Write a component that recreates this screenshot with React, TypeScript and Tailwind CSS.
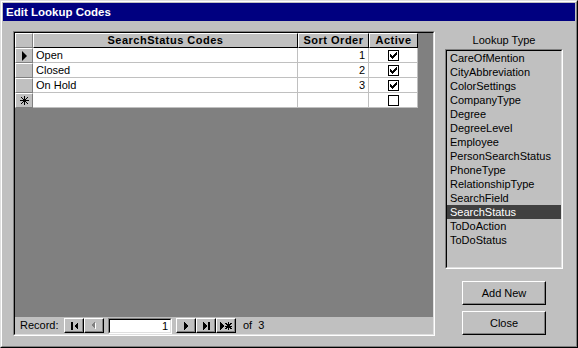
import React from 'react';

const rows = [
  {name: 'Open', order: 1, active: true},
  {name: 'Closed', order: 2, active: true},
  {name: 'On Hold', order: 3, active: true},
];

const lookupTypes = [
  'CareOfMention', 'CityAbbreviation', 'ColorSettings', 'CompanyType', 'Degree', 'DegreeLevel',
  'Employee', 'PersonSearchStatus', 'PhoneType', 'RelationshipType', 'SearchField', 'SearchStatus',
  'ToDoAction', 'ToDoStatus',
];

const raised = 'border border-t-white border-l-white border-r-black border-b-black shadow-[inset_-1px_-1px_0_#808080]';
const selectorCell = 'w-[18px] h-[15px] shrink-0 bg-[#c0c0c0] border border-t-white border-l-white border-r-[#808080] border-b-[#808080] flex items-center justify-center';

function Star({size = 9}: {size?: number}) {
  return (
    <svg width={size} height={size} viewBox="0 0 9 9" shapeRendering="crispEdges">
      <g stroke="black" strokeWidth="1">
        <line x1="4.5" y1="0" x2="4.5" y2="9"/>
        <line x1="0" y1="4.5" x2="9" y2="4.5"/>
        <line x1="1" y1="1" x2="8" y2="8"/>
        <line x1="8" y1="1" x2="1" y2="8"/>
      </g>
    </svg>
  );
}

function Check({on}: {on: boolean}) {
  return (
    <div className="w-[11px] h-[11px] border border-black bg-white flex items-center justify-center">
      {on && (
        <svg width="7" height="7" viewBox="0 0 7 7" shapeRendering="crispEdges">
          <path d="M6 0h1v3h-1v1h-1v1h-1v1h-1v1h-1v-1h-1v-1h-1v-3h1v1h1v1h1v-1h1v-1h1v-1h1z" fill="black"/>
        </svg>
      )}
    </div>
  );
}

function NavButton({children}: {children: React.ReactNode}) {
  return (
    <div className={`w-[20px] h-[15px] bg-[#c0c0c0] flex items-center justify-center ${raised}`}>
      {children}
    </div>
  );
}

function GridRow({name, order, active, current}: {name: string; order: number; active: boolean; current?: boolean}) {
  return (
    <div className="flex">
      <div className={selectorCell}>
        {current && (
          <svg width="5" height="10" viewBox="0 0 5 10">
            <polygon points="0,0 5,5 0,10" fill="black"/>
          </svg>
        )}
      </div>
      <div className="w-[265px] h-[15px] bg-white border-r border-b border-[#c0c0c0] pl-[3px] leading-[14px]">{name}</div>
      <div className="w-[71px] h-[15px] bg-white border-r border-b border-[#c0c0c0] pr-[3px] text-right leading-[14px]">{order}</div>
      <div className="w-[49px] h-[15px] bg-white border-r border-b border-[#c0c0c0] flex items-center justify-center">
        <Check on={active}/>
      </div>
    </div>
  );
}

export default function App() {
  return (
    <div className="w-[578px] h-[348px] bg-[#c0c0c0] border border-t-[#dfdfdf] border-l-[#dfdfdf] border-r-black border-b-black font-['Liberation_Sans',Arial,sans-serif] text-[11px] text-black select-none">
      <div className="h-full flex flex-col border border-t-white border-l-white border-r-[#808080] border-b-[#808080] p-px">
        <div className="h-[18px] shrink-0 bg-[#000080] text-white font-bold text-[11.5px] leading-[18px] pl-[3px]">Edit Lookup Codes</div>

        <div className="flex pl-[10px] pt-[10px]">
          {/* datasheet */}
          <div className="w-[422px] h-[305px] border border-t-[#808080] border-l-[#808080] border-r-white border-b-white">
            <div className="h-full flex flex-col border border-t-black border-l-black border-r-[#dfdfdf] border-b-[#dfdfdf]">
              <div className="flex-1 bg-[#808080]">
                <div className="flex">
                  <div className={selectorCell}/>
                  <div className="w-[265px] h-[15px] bg-[#c0c0c0] border border-t-white border-l-white border-r-black border-b-black font-bold tracking-[0.5px] text-center leading-[13px]">SearchStatus Codes</div>
                  <div className="w-[71px] h-[15px] bg-[#c0c0c0] border border-t-white border-l-white border-r-black border-b-black font-bold tracking-[0.5px] text-center leading-[13px]">Sort Order</div>
                  <div className="w-[49px] h-[15px] bg-[#c0c0c0] border border-t-white border-l-white border-r-black border-b-black font-bold tracking-[0.5px] text-center leading-[13px]">Active</div>
                </div>
                {rows.map((r, i) => (
                  <GridRow key={r.name} {...r} current={i === 0}/>
                ))}
                <div className="flex">
                  <div className={selectorCell}><Star/></div>
                  <div className="w-[265px] h-[15px] bg-white border-r border-b border-[#c0c0c0]"/>
                  <div className="w-[71px] h-[15px] bg-white border-r border-b border-[#c0c0c0]"/>
                  <div className="w-[49px] h-[15px] bg-white border-r border-b border-[#c0c0c0] flex items-center justify-center">
                    <Check on={false}/>
                  </div>
                </div>
              </div>

              {/* record navigator */}
              <div className="h-[17px] shrink-0 flex items-center pl-[5px] bg-[#c0c0c0]">
                <span className="w-[44px]">Record:</span>
                <NavButton>
                  <svg width="7" height="8" viewBox="0 0 7 8" shapeRendering="crispEdges">
                    <rect x="0" y="0" width="2" height="8" fill="black"/>
                    <polygon points="7,0 3,4 7,8" fill="black"/>
                  </svg>
                </NavButton>
                <NavButton>
                  <svg width="6" height="9" viewBox="0 0 6 9" shapeRendering="crispEdges">
                    <polygon points="5,1 1,5 5,9" fill="white"/>
                    <polygon points="4,0 0,4 4,8" fill="#808080"/>
                  </svg>
                </NavButton>
                <div className="ml-[4px] w-[64px] h-[16px] border border-t-[#808080] border-l-[#808080] border-r-white border-b-white">
                  <div className="h-full bg-white border border-t-black border-l-black border-r-[#dfdfdf] border-b-[#dfdfdf] text-right pr-[2px] leading-[12px]">1</div>
                </div>
                <div className="ml-[4px] flex">
                  <NavButton>
                    <svg width="4" height="8" viewBox="0 0 4 8" shapeRendering="crispEdges">
                      <polygon points="0,0 4,4 0,8" fill="black"/>
                    </svg>
                  </NavButton>
                  <NavButton>
                    <svg width="7" height="8" viewBox="0 0 7 8" shapeRendering="crispEdges">
                      <polygon points="0,0 4,4 0,8" fill="black"/>
                      <rect x="5" y="0" width="2" height="8" fill="black"/>
                    </svg>
                  </NavButton>
                  <NavButton>
                    <svg width="12" height="8" viewBox="0 0 12 8" shapeRendering="crispEdges">
                      <polygon points="0,0 4,4 0,8" fill="black"/>
                      <g stroke="black" strokeWidth="1">
                        <line x1="8.5" y1="0" x2="8.5" y2="8"/>
                        <line x1="5" y1="4.5" x2="12" y2="4.5"/>
                        <line x1="5.5" y1="1" x2="11.5" y2="7"/>
                        <line x1="11.5" y1="1" x2="5.5" y2="7"/>
                      </g>
                    </svg>
                  </NavButton>
                </div>
                <span className="ml-[7px]">of</span>
                <span className="ml-[6px]">3</span>
              </div>
            </div>
          </div>

          {/* lookup type panel */}
          <div className="ml-[10px] w-[118px] flex flex-col items-center">
            <div className="h-[18px] leading-[18px] text-center">Lookup Type</div>
            <div className="w-[118px] h-[220px] border border-t-[#808080] border-l-[#808080] border-r-white border-b-white">
              <div className="h-full border border-t-black border-l-black border-r-[#dfdfdf] border-b-[#dfdfdf] bg-[#c0c0c0]">
                {lookupTypes.map(t => (
                  <div
                    key={t}
                    className={`h-[14px] leading-[14px] pl-[3px] ${t === 'SearchStatus' ? 'bg-[#404040] text-white' : ''}`}
                  >
                    {t}
                  </div>
                ))}
              </div>
            </div>
            <div className={`mt-[12px] w-[84px] h-[24px] flex items-center justify-center ${raised} shadow-[inset_-1px_-1px_0_#808080,inset_1px_1px_0_#dfdfdf]`}>Add New</div>
            <div className={`mt-[6px] w-[84px] h-[24px] flex items-center justify-center ${raised} shadow-[inset_-1px_-1px_0_#808080,inset_1px_1px_0_#dfdfdf]`}>Close</div>
          </div>
        </div>
      </div>
    </div>
  );
}
